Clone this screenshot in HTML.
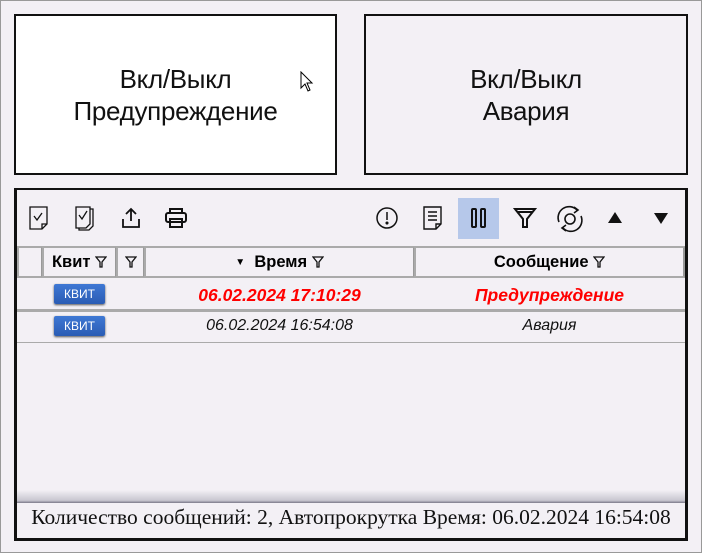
<!DOCTYPE html>
<html><head><meta charset="utf-8"><style>
*{margin:0;padding:0;box-sizing:border-box}
body{width:702px;height:553px;background:#f3f0f5;position:relative;overflow:hidden;font-family:"Liberation Sans",sans-serif}
.a{position:absolute}
.btn{position:absolute;border:2px solid #111;display:flex;align-items:center;justify-content:center;text-align:center;font-size:26px;line-height:32px;color:#111;font-family:"Liberation Sans",sans-serif;letter-spacing:-0.3px}
.hd{position:absolute;top:246px;height:32px;border:2px solid #aaa;border-right-color:#999;font-weight:bold;font-size:16.5px;display:flex;align-items:center;justify-content:center;background:#f3f0f5}
.kv{position:absolute;left:54px;width:51px;height:20px;background:linear-gradient(#3f78d4,#2a5cb4);border-radius:2px;color:#fff;font-size:12px;text-align:center;line-height:20px;box-shadow:0 1px 2px #555}
.ic{position:absolute}
.r{position:absolute;text-align:center;font-style:italic;line-height:20px;white-space:nowrap}
</style></head><body>
<div class="a" style="left:0;top:0;width:702px;height:553px;border:1px solid #999"></div>
<div class="btn" style="left:14px;top:14px;width:323px;height:161px;background:#fff">Вкл/Выкл<br>Предупреждение</div>
<svg class="a" style="left:300px;top:71px" width="14" height="22" viewBox="0 0 14 22"><path d="M1 1 L1 17 L5 13 L8 20 L10 19 L7 12 L12 12 Z" fill="#fff" stroke="#000" stroke-width="1"/></svg>
<div class="btn" style="left:364px;top:14px;width:324px;height:161px;background:#f3f0f5">Вкл/Выкл<br>Авария</div>

<div class="a" style="left:14px;top:188px;width:674px;height:353px;border:3px solid #111;border-top-width:2px"></div>

<svg class="ic" style="left:28px;top:205px" width="22" height="26" viewBox="0 0 22 26" fill="none" stroke="#111" stroke-width="1.3"><path d="M2 2H19V19L14 24H2Z"/><path d="M14 24V19H19" /><path d="M6 11L9 15L14 8"/></svg>
<svg class="ic" style="left:74px;top:205px" width="24" height="26" viewBox="0 0 24 26" fill="none" stroke="#111" stroke-width="1.3"><path d="M2 2H16V19L12 23H2Z"/><path d="M16 4H19V21L15 25H5V23"/><path d="M5 10L8 14L13 6"/></svg>
<svg class="ic" style="left:120px;top:207px" width="22" height="22" viewBox="0 0 22 22" fill="none" stroke="#111" stroke-width="1.8"><path d="M11 2V14M6 7L11 2L16 7"/><path d="M3 12V20H19V12"/></svg>
<svg class="ic" style="left:164px;top:207px" width="24" height="22" viewBox="0 0 24 22" fill="none" stroke="#111" stroke-width="2"><path d="M6 6V2H18V6"/><rect x="2" y="6" width="20" height="9" rx="2"/><rect x="6" y="12" width="12" height="8"/></svg>
<svg class="ic" style="left:375px;top:206px" width="24" height="24" viewBox="0 0 24 24" fill="none" stroke="#111" stroke-width="1.5"><circle cx="12" cy="12" r="10"/><path d="M12 6V14"/><circle cx="12" cy="17" r=".8" fill="#111"/></svg>
<svg class="ic" style="left:422px;top:205px" width="22" height="26" viewBox="0 0 22 26" fill="none" stroke="#111" stroke-width="1.4"><path d="M2 2H19V19L14 24H2Z"/><path d="M14 24V19H19"/><path d="M6 7H15M6 11H15M6 15H15"/></svg>
<div class="a" style="left:458px;top:198px;width:41px;height:41px;background:#b6c8ea"></div>
<svg class="ic" style="left:470px;top:207px" width="18" height="22" viewBox="0 0 18 22" fill="none" stroke="#111" stroke-width="2"><rect x="2" y="2" width="4" height="18" rx="1"/><rect x="11" y="2" width="4" height="18" rx="1"/></svg>
<svg class="ic" style="left:513px;top:207px" width="24" height="22" viewBox="0 0 24 22" fill="none" stroke="#111" stroke-width="2"><path d="M2 2H22L14 12V20H10V12Z"/><path d="M4 5H20"/></svg>
<svg class="ic" style="left:555px;top:204px" width="30" height="30" viewBox="0 0 30 30" fill="none" stroke="#111" stroke-width="1.6"><circle cx="15" cy="15" r="5"/><path d="M4 18A11 11 0 0 1 22 6"/><path d="M19 3L23 6L19 9"/><path d="M26 12A11 11 0 0 1 8 24"/><path d="M11 27L7 24L11 21"/></svg>
<svg class="ic" style="left:607px;top:211px" width="16" height="13" viewBox="0 0 16 13"><path d="M1 12H15L8 1Z" fill="#111"/></svg>
<svg class="ic" style="left:653px;top:212px" width="16" height="13" viewBox="0 0 16 13"><path d="M1 1H15L8 12Z" fill="#111"/></svg>

<div class="hd" style="left:17px;width:26px"></div>
<div class="hd" style="left:42px;width:75px">Квит&nbsp;<svg width="12" height="12" viewBox="0 0 12 12" fill="none" stroke="#111" stroke-width="1.3"><path d="M1 1H11L7 6V11H5V6Z"/></svg></div>
<div class="hd" style="left:116px;width:29px"><svg width="12" height="12" viewBox="0 0 12 12" fill="none" stroke="#111" stroke-width="1.3"><path d="M1 1H11L7 6V11H5V6Z"/></svg></div>
<div class="hd" style="left:144px;width:271px"><span style="font-size:10px">▼</span>&nbsp;&nbsp;Время&nbsp;<svg width="12" height="12" viewBox="0 0 12 12" fill="none" stroke="#111" stroke-width="1.3"><path d="M1 1H11L7 6V11H5V6Z"/></svg></div>
<div class="hd" style="left:414px;width:271px">Сообщение&nbsp;<svg width="12" height="12" viewBox="0 0 12 12" fill="none" stroke="#111" stroke-width="1.3"><path d="M1 1H11L7 6V11H5V6Z"/></svg></div>

<div class="kv" style="top:284px">КВИТ</div>
<div class="r" style="left:144px;top:285px;width:271px;color:#f00;font-weight:bold;font-size:17.5px">06.02.2024 17:10:29</div>
<div class="r" style="left:414px;top:285px;width:271px;color:#f00;font-weight:bold;font-size:17.5px">Предупреждение</div>
<div class="a" style="left:17px;top:309px;width:668px;height:3px;background:#aaa"></div>
<div class="kv" style="top:316px">КВИТ</div>
<div class="r" style="left:144px;top:316px;width:271px;color:#111;font-size:16px">06.02.2024 16:54:08</div>
<div class="r" style="left:414px;top:316px;width:271px;color:#111;font-size:16px">Авария</div>
<div class="a" style="left:17px;top:342px;width:668px;height:1px;background:#aaa"></div>

<div class="a" style="left:17px;top:490px;width:668px;height:13px;background:linear-gradient(#f3f0f5,#c8c6d0 80%,#7a7888)"></div>
<div class="a" style="left:17px;top:505px;width:668px;text-align:center;font-family:'Liberation Serif',serif;font-size:21.5px;color:#111;white-space:nowrap">Количество сообщений: 2, Автопрокрутка Время: 06.02.2024 16:54:08</div>
</body></html>
